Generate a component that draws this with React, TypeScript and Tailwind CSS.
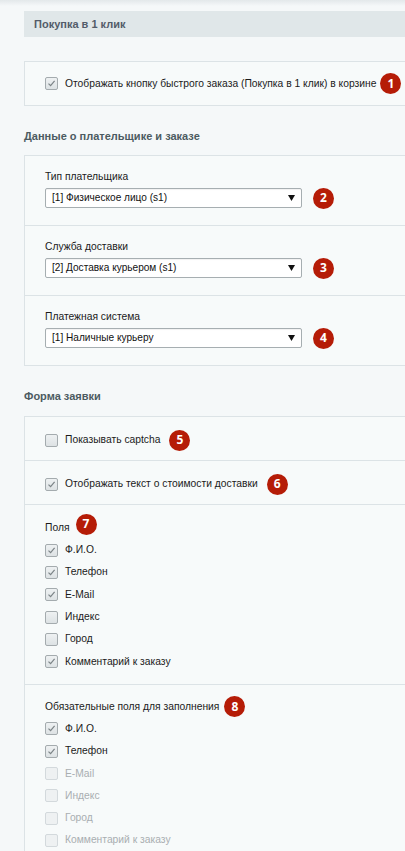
import React from "react";

const font = { fontFamily: '"Liberation Sans", Arial, sans-serif' };

function Badge({ n }: { n: number }) {
  return (
    <span
      className="flex items-center justify-center w-[21px] h-[21px] rounded-full bg-[#b51c07] text-white text-[12px] font-bold leading-none shrink-0"
      style={{ fontFamily: '"Open Sans", "Liberation Sans", sans-serif' }}
    >
      {n}
    </span>
  );
}

function Check({ checked, disabled }: { checked?: boolean; disabled?: boolean }) {
  return (
    <span
      className={
        "flex items-center justify-center w-[13px] h-[13px] rounded-[2px] border shrink-0 " +
        (disabled
          ? "border-[#d3d9dc] bg-[#eef1f2]"
          : "border-[#a4abae] bg-gradient-to-b from-[#eef1f2] to-[#dde2e4]")
      }
    >
      {checked && (
        <svg width="9" height="9" viewBox="0 0 9 9">
          <path d="M1.5 4.6 L3.6 6.7 L7.6 1.8" fill="none" stroke="#7c8487" strokeWidth="1.2" />
        </svg>
      )}
    </span>
  );
}

function CheckRow({
  label,
  checked,
  disabled,
  badge,
}: {
  label: string;
  checked?: boolean;
  disabled?: boolean;
  badge?: number;
}) {
  return (
    <div className="flex items-center h-[22.3px]">
      <Check checked={checked} disabled={disabled} />
      <span
        className={
          "ml-[7px] text-[10.3px] leading-[12px] whitespace-nowrap " +
          (disabled ? "text-[#a9aeb1]" : "text-[#1b1b1b]")
        }
      >
        {label}
      </span>
      {badge !== undefined && (
        <div className="ml-[9px] flex">
          <Badge n={badge} />
        </div>
      )}
    </div>
  );
}

function Select({ value, badge }: { value: string; badge: number }) {
  return (
    <div className="flex items-center h-[20px]">
      <div className="flex items-center justify-between w-[257px] h-[20px] bg-white border border-[#a6aeb1] rounded-[2px] pl-[6px] pr-[6px] shadow-[inset_0_1px_1px_rgba(0,0,0,0.06)]">
        <span className="text-[10.1px] leading-[12px] text-[#111]">{value}</span>
        <svg width="7" height="6" viewBox="0 0 7 6">
          <path d="M0 0 H7 L3.5 6 Z" fill="#111" />
        </svg>
      </div>
      <div className="ml-[11px] flex">
        <Badge n={badge} />
      </div>
    </div>
  );
}

function SelectSection({ label, value, badge, last }: { label: string; value: string; badge: number; last?: boolean }) {
  return (
    <div className={"pl-[20px] pt-[15px] pb-[17px] " + (last ? "" : "border-b border-[#dce3e6]")}>
      <div className="text-[10.3px] text-[#1b1b1b] h-[12px] leading-[12px] mb-[5px]">{label}</div>
      <Select value={value} badge={badge} />
    </div>
  );
}

export default function App() {
  return (
    <div className="min-h-[851px] w-[405px] overflow-hidden bg-[#f5f8f9] relative" style={font}>
      <div className="absolute top-0 left-0 right-0 h-[6px] bg-gradient-to-b from-[#e3e8ea] to-[#f5f8f9]" />
      <div className="pt-[11px] pl-[24px]">
        <div className="h-[26px] bg-[#e0e7e9] flex items-center pl-[10px] text-[11px] font-bold text-[#535c69]">
          Покупка в 1 клик
        </div>

        <div className="mt-[24px] h-[45px] border border-r-0 border-[#dce3e6] bg-[#f7fafa] flex items-center pl-[20px]">
          <Check checked />
          <span className="ml-[7px] text-[10.3px] leading-[12px] text-[#1b1b1b] whitespace-nowrap">
            Отображать кнопку быстрого заказа (Покупка в 1 клик) в корзине
          </span>
          <div className="ml-[4px] flex">
            <Badge n={1} />
          </div>
        </div>

        <div className="mt-[22px] h-[16px] text-[11px] font-bold text-[#4c5b61] leading-[16px]">
          Данные о плательщике и заказе
        </div>

        <div className="mt-[11px] border border-r-0 border-[#dce3e6] bg-[#f7fafa]">
          <SelectSection label="Тип плательщика" value="[1] Физическое лицо (s1)" badge={2} />
          <SelectSection label="Служба доставки" value="[2] Доставка курьером (s1)" badge={3} />
          <SelectSection label="Платежная система" value="[1] Наличные курьеру" badge={4} last />
        </div>

        <div className="mt-[22px] h-[16px] text-[11px] font-bold text-[#4c5b61] leading-[16px]">
          Форма заявки
        </div>

        <div className="mt-[12px] border border-r-0 border-[#dce3e6] bg-[#f7fafa]">
          <div className="h-[44px] flex items-center pl-[20px] pt-[4px] border-b border-[#dce3e6]">
            <CheckRow label="Показывать captcha" badge={5} />
          </div>
          <div className="h-[44px] flex items-center pl-[20px] pt-[4px] border-b border-[#dce3e6]">
            <CheckRow label="Отображать текст о стоимости доставки" checked badge={6} />
          </div>
          <div className="pl-[20px] pt-[12px] pb-[11px] border-b border-[#dce3e6]">
            <div className="flex items-center h-[22px]">
              <span className="text-[10.3px] leading-[12px] text-[#1b1b1b]">Поля</span>
              <div className="ml-[6px] -mt-[8px] flex">
                <Badge n={7} />
              </div>
            </div>
            <CheckRow label="Ф.И.О." checked />
            <CheckRow label="Телефон" checked />
            <CheckRow label="E-Mail" checked />
            <CheckRow label="Индекс" />
            <CheckRow label="Город" />
            <CheckRow label="Комментарий к заказу" checked />
          </div>
          <div className="pl-[20px] pt-[11px] pb-[11px]">
            <div className="flex items-center h-[22px]">
              <span className="text-[10.3px] leading-[12px] text-[#1b1b1b]">Обязательные поля для заполнения</span>
              <div className="ml-[5px] flex">
                <Badge n={8} />
              </div>
            </div>
            <CheckRow label="Ф.И.О." checked />
            <CheckRow label="Телефон" checked />
            <CheckRow label="E-Mail" disabled />
            <CheckRow label="Индекс" disabled />
            <CheckRow label="Город" disabled />
            <CheckRow label="Комментарий к заказу" disabled />
          </div>
        </div>
      </div>
    </div>
  );
}
